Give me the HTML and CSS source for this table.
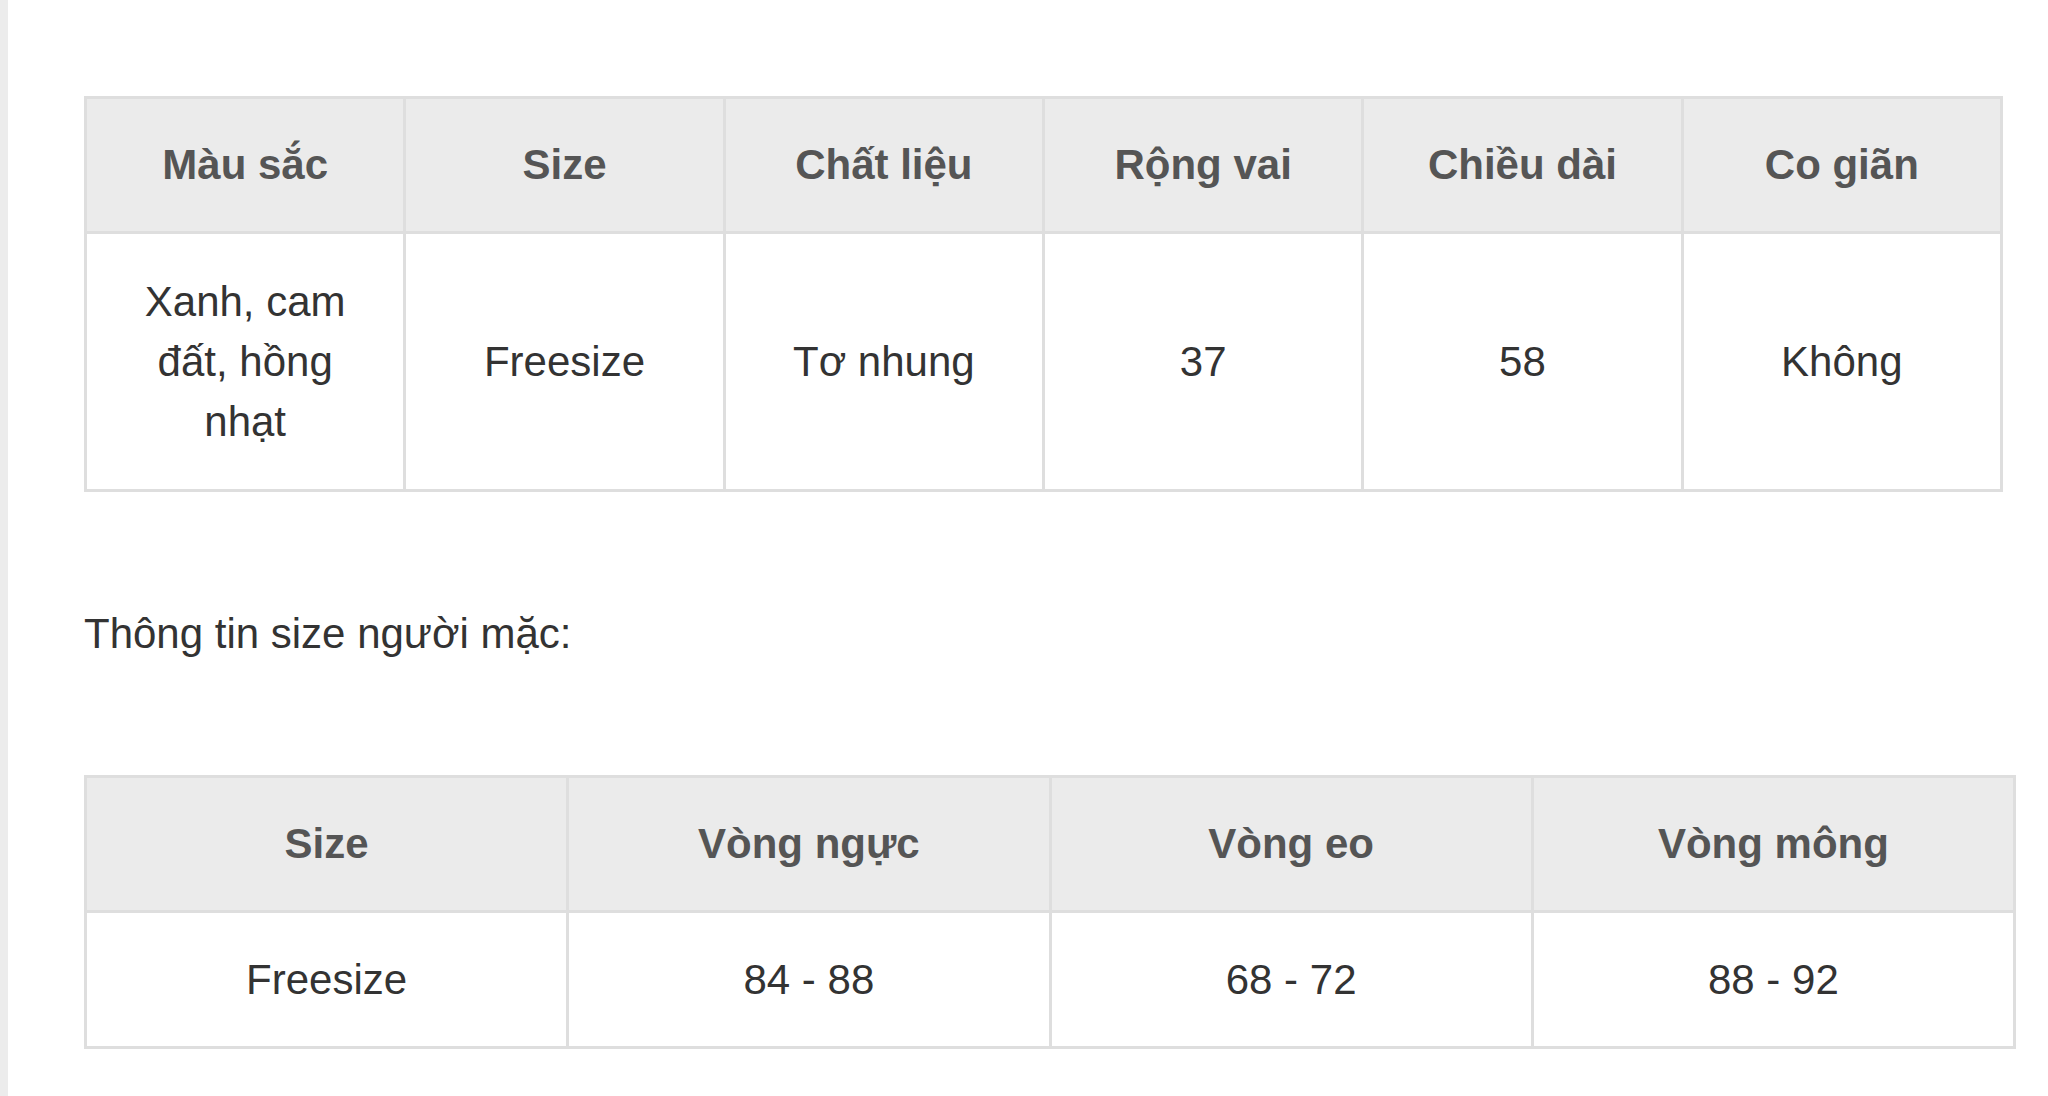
FILE: index.html
```html
<!DOCTYPE html>
<html lang="vi">
<head>
<meta charset="utf-8">
<link rel="stylesheet" href="styles.css">
</head>
<body>
<div class="page">
  <table class="spec spec-product">
    <thead>
      <tr><th>Màu sắc</th><th>Size</th><th>Chất liệu</th><th>Rộng vai</th><th>Chiều dài</th><th>Co giãn</th></tr>
    </thead>
    <tbody>
      <tr><td>Xanh, cam đất, hồng nhạt</td><td>Freesize</td><td>Tơ nhung</td><td>37</td><td>58</td><td>Không</td></tr>
    </tbody>
  </table>
  <p class="note">Thông tin size người mặc:</p>
  <table class="spec spec-wearer">
    <thead>
      <tr><th>Size</th><th>Vòng ngực</th><th>Vòng eo</th><th>Vòng mông</th></tr>
    </thead>
    <tbody>
      <tr><td>Freesize</td><td>84 - 88</td><td>68 - 72</td><td>88 - 92</td></tr>
    </tbody>
  </table>
</div>
</body>
</html>
```

FILE: styles.css
```css
html, body {
  margin: 0;
  padding: 0;
  background: #fff;
}
body {
  font-family: "Liberation Sans", Arial, sans-serif;
  font-size: 42px;
  line-height: 60px;
  color: #333;
}
.page {
  min-height: 1096px;
  box-sizing: border-box;
  border-left: 8px solid #ececec;
  padding: 96px 0 0 76px;
}
.spec {
  border-collapse: collapse;
  table-layout: fixed;
  border: 3px solid #dedede;
}
.spec-product { width: 1919px; }
.spec-wearer { width: 1932px; }
.spec th,
.spec td {
  border: 3px solid #dedede;
  padding: 36px 36px;
  text-align: center;
  vertical-align: middle;
}
.spec th {
  background: #ebebeb;
  color: #555;
  font-weight: bold;
}
.spec td {
  color: #333;
}
.spec-product td {
  padding: 38px 36px 37px;
}
.spec-wearer td {
  padding: 37px 36px 36px;
}
.note {
  margin: 112px 0 111px;
  color: #333;
}
```
